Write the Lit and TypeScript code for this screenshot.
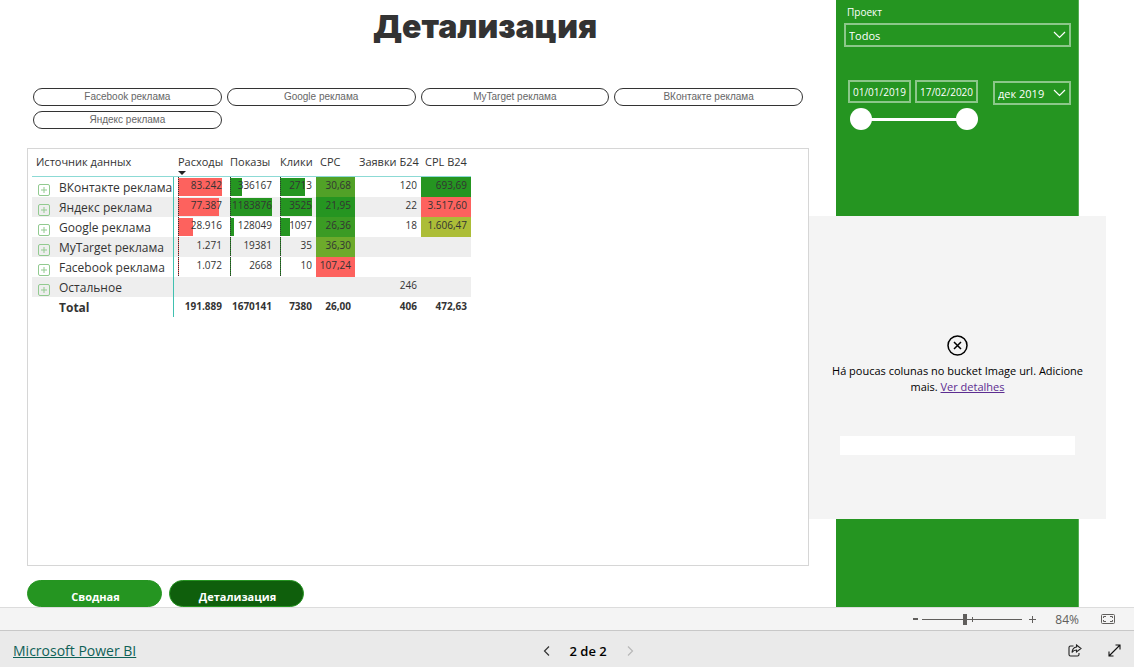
import { LitElement, html, css, svg, nothing } from "lit";
import { customElement, state } from "lit/decorators.js";

interface Cell {
  text: string;
  share?: number;
  tone?: string;
}

interface Row {
  name: string;
  cells: Cell[];
}

const RED = "#fd625e";
const GREEN = "#259521";

const COLUMNS = ["Расходы", "Показы", "Клики", "CPC", "Заявки Б24", "CPL В24"];

const ROWS: Row[] = [
  { name: "ВКонтакте реклама", cells: [{ text: "83.242", share: 100 }, { text: "336167", share: 28 }, { text: "2713", share: 77 }, { text: "30,68", tone: "#51a127" }, { text: "120" }, { text: "693,69", tone: GREEN }] },
  { name: "Яндекс реклама", cells: [{ text: "77.387", share: 93 }, { text: "1183876", share: 100 }, { text: "3525", share: 100 }, { text: "21,95", tone: GREEN }, { text: "22" }, { text: "3.517,60", tone: RED }] },
  { name: "Google реклама", cells: [{ text: "28.916", share: 35 }, { text: "128049", share: 10 }, { text: "1097", share: 31 }, { text: "26,36", tone: "#3b9b24" }, { text: "18" }, { text: "1.606,47", tone: "#acbd37" }] },
  { name: "MyTarget реклама", cells: [{ text: "1.271", share: 2 }, { text: "19381", share: 2 }, { text: "35", share: 1 }, { text: "36,30", tone: "#6daa2b" }, { text: "" }, { text: "" }] },
  { name: "Facebook реклама", cells: [{ text: "1.072", share: 1 }, { text: "2668", share: 0 }, { text: "10", share: 0 }, { text: "107,24", tone: RED }, { text: "" }, { text: "" }] },
  { name: "Остальное", cells: [{ text: "" }, { text: "" }, { text: "" }, { text: "" }, { text: "246" }, { text: "" }] },
];

const TOTALS = ["191.889", "1670141", "7380", "26,00", "406", "472,63"];

const chevron = html`<svg class="chevron" width="13" height="8" viewBox="0 0 13 8" aria-hidden="true">
  ${svg`<path d="M1 1l5.5 5.5L12 1" fill="none" stroke="currentColor" stroke-width="1.2"/>`}
</svg>`;

@customElement("source-table")
export class SourceTable extends LitElement {
  static styles = css`
    :host { display: block; color: #333; }
    table { border-collapse: separate; border-spacing: 0; table-layout: fixed; width: 439px; }
    .c-name { width: 142px; }
    .c-0 { width: 52px; }
    .c-1 { width: 50px; }
    .c-2 { width: 40px; }
    .c-3 { width: 39px; }
    .c-4 { width: 66px; }
    .c-5 { width: 50px; }
    th, td { padding: 0; white-space: nowrap; }
    thead th {
      height: 28px; font-weight: 400; font-size: 11px; line-height: 16px; text-align: left;
      vertical-align: top; padding: 5px 0 0 4px; box-sizing: border-box;
      border-bottom: 1px solid #8cdad5;
    }
    .sort {
      border: 0; background: none; padding: 0; font: inherit; color: inherit; display: block; cursor: pointer;
    }
    .sort svg { display: block; }
    tbody tr { height: 20px; }
    tbody tr:nth-child(even) { background: #eee; }
    .name {
      font-weight: 400; font-size: 12px; line-height: 20px; text-align: left;
      border-right: 1px solid #40c0b0;
    }
    .label { display: flex; align-items: center; gap: 9px; padding: 1px 0 0 6px; height: 20px; box-sizing: border-box; }
    .expand { border: 0; background: none; padding: 5px 0 0; display: block; height: 17px; cursor: pointer; }
    .expand svg { display: block; }
    td { font-size: 10px; line-height: 16px; text-align: right; vertical-align: top; padding-right: 4px; height: 20px; }
    .bar { display: grid; height: 20px; margin-left: 4px; }
    .bar::before {
      content: ""; grid-area: 1 / 1; width: 1px; z-index: 1;
      background: repeating-linear-gradient(#333 0 1px, transparent 1px 2px);
    }
    .fill { grid-area: 1 / 1; height: 18px; margin-top: 1px; min-width: 1px; background: #259521; }
    .spend .fill { background: #fd625e; }
    .value { grid-area: 1 / 1; z-index: 1; }
    .total .name { font-weight: 700; }
    .total .label { padding-left: 27px; }
    .total td { font-weight: 700; line-height: 18px; }
  `;

  render() {
    return html`<table>
      <colgroup>
        <col class="c-name" />
        ${COLUMNS.map((_, i) => html`<col class="c-${i}" />`)}
      </colgroup>
      <thead>
        <tr>
          <th scope="col">Источник данных</th>
          ${COLUMNS.map((c, i) => html`<th scope="col">
            <button class="sort" type="button">${c}${i === 0
              ? html`<svg width="8" height="5" viewBox="0 0 8 5"><path d="M0 1h8L4 5z" fill="#222" /></svg>`
              : nothing}</button>
          </th>`)}
        </tr>
      </thead>
      <tbody>
        ${ROWS.map((r) => html`<tr>
          <th class="name" scope="row">
            <div class="label">
              <button class="expand" type="button" aria-label=${r.name}>
                <svg width="12" height="12" viewBox="0 0 12 12" fill="none" stroke="#92ca90">
                  <rect x=".5" y=".5" width="11" height="11" rx="1.5" />
                  <path d="M6 3v6M3 6h6" />
                </svg>
              </button>
              ${r.name}
            </div>
          </th>
          ${r.cells.map((c, i) => c.share === undefined
            ? html`<td style=${c.tone ? `background:${c.tone}` : nothing}>${c.text}</td>`
            : html`<td>
                <div class="bar ${i === 0 ? "spend" : ""}">
                  <span class="fill" style="width:${c.share}%"></span>
                  <span class="value">${c.text}</span>
                </div>
              </td>`)}
        </tr>`)}
        <tr class="total">
          <th class="name" scope="row"><div class="label">Total</div></th>
          ${TOTALS.map((t) => html`<td>${t}</td>`)}
        </tr>
      </tbody>
    </table>`;
  }
}

@customElement("filter-panel")
export class FilterPanel extends LitElement {
  static styles = css`
    :host { display: block; color: #fff; box-sizing: border-box; padding: 4px 7px 0 8px; }
    * { box-sizing: border-box; }
    .caption { display: block; font-size: 10px; line-height: 16px; padding-left: 3px; font-weight: 500; }
    .picker { position: relative; display: block; margin-top: 3px; }
    .picker .chevron { position: absolute; right: 5px; top: 8px; pointer-events: none; }
    select, .date {
      font-family: inherit; color: #fff; background: transparent; border: 2px solid #8cc78a; border-radius: 0;
      appearance: none; width: 100%; height: 24px; margin: 0; display: block;
    }
    select { font-size: 11px; font-weight: 500; padding: 1px 3px 0; }
    option { color: #222; }
    .period { display: flex; justify-content: space-between; margin-top: 33px; padding-left: 4px; }
    .range { width: 130px; }
    .dates { display: grid; grid-template-columns: 1fr 1fr; gap: 4px; }
    .date { font-size: 10px; text-align: center; padding: 1px 0 0; height: 23px; }
    .month { width: 78px; margin-top: 1px; }
    .slider { position: relative; height: 22px; margin: 5px 0 0 2px; display: grid; align-items: center; }
    .track { height: 3px; background: #fff; margin: 0 11px; }
    .knob {
      position: absolute; inset: 0; width: 100%; height: 22px; margin: 0; appearance: none;
      background: transparent; pointer-events: none;
    }
    .knob::-webkit-slider-thumb {
      appearance: none; width: 22px; height: 22px; border-radius: 50%; background: #fff; pointer-events: auto;
    }
  `;

  render() {
    return html`
      <label class="caption" for="project">Проект</label>
      <div class="picker">
        <select id="project"><option>Todos</option></select>${chevron}
      </div>
      <div class="period">
        <div class="range">
          <div class="dates">
            <input class="date" type="text" aria-label="Data inicial" value="01/01/2019" />
            <input class="date" type="text" aria-label="Data final" value="17/02/2020" />
          </div>
          <div class="slider">
            <div class="track"></div>
            <input class="knob" type="range" aria-label="Data inicial" min="0" max="412" value="0" />
            <input class="knob" type="range" aria-label="Data final" min="0" max="412" value="412" />
          </div>
        </div>
        <div class="picker month">
          <select aria-label="Mês"><option>дек 2019</option></select>${chevron}
        </div>
      </div>
    `;
  }
}

@customElement("app-root")
export class AppRoot extends LitElement {
  @state() private sources = ["Facebook реклама", "Google реклама", "MyTarget реклама", "ВКонтакте реклама", "Яндекс реклама"];

  static styles = css`
    :host {
      display: flex; flex-direction: column; height: 100vh; background: #fff;
      font-family: "Open Sans", "Noto Sans", sans-serif; color: #333;
    }
    * { box-sizing: border-box; }
    button { font-family: inherit; cursor: pointer; }
    .stage { flex: 1; min-height: 0; display: flex; padding: 0 28px 0 27px; }
    .report { flex: 1; min-width: 0; display: flex; flex-direction: column; }
    h1 {
      margin: 0; padding: 6px 0 0 134px; font-family: Inter, "Liberation Sans", sans-serif; font-weight: 900;
      font-size: 32px; line-height: 42px; text-align: center; color: #333;
    }
    .chips { display: grid; grid-template-columns: repeat(4, 1fr); gap: 5px; padding: 0 6px; margin-top: 40px; }
    .chip {
      height: 18px; border: 1px solid #333; border-radius: 9px; background: #fff; color: #666; padding: 0;
      font-family: "Liberation Sans", sans-serif; font-size: 10px; line-height: 16px;
    }
    .card { flex: 1; border: 1px solid #d6d6d6; margin-top: 19px; padding: 0 4px; }
    .pages { display: flex; gap: 7px; padding-top: 14px; }
    .page {
      width: 135px; height: 27px; border: 1px solid #259521; border-radius: 14px; background: #259521; color: #fff;
      font-weight: 700; font-size: 11px; line-height: 18px; padding: 6px 0 0 2px;
    }
    .current { background: #0f5f0c; }
    .side { width: 297px; display: flex; flex-direction: column; }
    .green { background: #259521; margin: 0 27px; border-right: 1px solid #58ae55; }
    .filters { height: 216px; }
    .rest { flex: 1; }
    .error {
      height: 303px; background: #f4f4f4; display: flex; flex-direction: column; align-items: center;
      padding: 119px 16px 0; font-size: 11px; line-height: 16px; color: #000; text-align: center;
    }
    .error p { margin: 7px 0 0; }
    .error a { color: #5c2d91; }
    .blank { align-self: stretch; margin: 41px 15px 0; height: 19px; background: #fff; }
    .zoombar {
      height: 23px; background: #f4f4f4; border-top: 1px solid #dcdcdc; display: flex; align-items: center;
      justify-content: flex-end; padding-right: 19px; color: #605e5c; font-size: 12px;
    }
    .step { border: 0; background: none; padding: 0; width: 14px; height: 20px; color: inherit; display: grid; place-items: center; }
    .scale { position: relative; width: 100px; height: 12px; display: grid; margin: 0 3px 0 0; }
    .zoom {
      margin: 0; width: 100px; height: 12px; appearance: none;
      background: linear-gradient(#605e5c, #605e5c) center / 100% 1px no-repeat, linear-gradient(#605e5c, #605e5c) center / 1px 5px no-repeat;
    }
    .zoom::-webkit-slider-thumb { appearance: none; width: 4px; height: 11px; background: #605e5c; }
    .percent { margin: 0 22px 0 16px; }
    .fit { border: 0; background: none; padding: 0; display: block; color: inherit; }
    .fit svg, .tool svg, .nav svg { display: block; }
    .footer {
      height: 37px; background: #eaeaea; border-top: 1px solid #c8c8c8; display: flex; align-items: center;
      justify-content: space-between; padding: 3px 13px 0; color: #000;
    }
    .brand { color: #0f6157; font-size: 14px; line-height: 20px; }
    .pager { display: flex; align-items: center; gap: 20px; font-size: 13px; line-height: 20px; font-weight: 600; }
    .nav, .tool { border: 0; background: none; padding: 0; color: #333; }
    .nav:disabled { color: #b8b8b8; }
    .tools { display: flex; gap: 26px; padding-left: 28px; }
  `;

  render() {
    return html`
      <main class="stage">
        <section class="report">
          <h1>Детализация</h1>
          <div class="chips">${this.sources.map((s) => html`<button class="chip" type="button">${s}</button>`)}</div>
          <div class="card"><source-table></source-table></div>
          <nav class="pages">
            <button class="page" type="button">Сводная</button>
            <button class="page current" type="button" aria-current="page">Детализация</button>
          </nav>
        </section>
        <aside class="side">
          <filter-panel class="green filters"></filter-panel>
          <div class="error">
            <svg width="21" height="21" viewBox="0 0 21 21" fill="none" stroke="#000" stroke-width="1.5">
              <circle cx="10.5" cy="10.5" r="9.5" />
              <path d="M7 7l7 7M14 7l-7 7" />
            </svg>
            <p>Há poucas colunas no bucket Image url. Adicione mais. <a href="#">Ver detalhes</a></p>
            <div class="blank"></div>
          </div>
          <div class="green rest"></div>
        </aside>
      </main>
      <div class="zoombar">
        <button class="step" type="button" aria-label="Menos zoom">
          <svg width="5" height="2"><rect width="5" height="2" fill="#605e5c" /></svg>
        </button>
        <div class="scale"><input class="zoom" type="range" aria-label="Zoom" min="0" max="200" value="84" /></div>
        <button class="step" type="button" aria-label="Mais zoom">
          <svg width="7" height="7" viewBox="0 0 7 7" stroke="#605e5c"><path d="M3.5 0v7M0 3.5h7" /></svg>
        </button>
        <span class="percent">84%</span>
        <button class="fit" type="button" aria-label="Ajustar à página">
          <svg width="14" height="10" viewBox="0 0 14 10" fill="none" stroke="currentColor">
            <rect x=".5" y=".5" width="13" height="9" rx="1" />
            <path d="M5 2.5H2.5V4M2.5 6v1.5H5M9 2.5h2.5V4M11.5 6v1.5H9" />
          </svg>
        </button>
      </div>
      <footer class="footer">
        <a class="brand" href="#">Microsoft Power BI</a>
        <div class="pager">
          <button class="nav" type="button" aria-label="Página anterior">
            <svg width="7" height="10" viewBox="0 0 7 10" fill="none" stroke="currentColor" stroke-width="1.2"><path d="M6 .5L1.5 5 6 9.5" /></svg>
          </button>
          <span>2 de 2</span>
          <button class="nav" type="button" aria-label="Próxima página" disabled>
            <svg width="7" height="10" viewBox="0 0 7 10" fill="none" stroke="currentColor" stroke-width="1.2"><path d="M1 .5L5.5 5 1 9.5" /></svg>
          </button>
        </div>
        <div class="tools">
          <button class="tool" type="button" aria-label="Compartilhar">
            <svg width="14" height="13" viewBox="0 0 14 13" fill="none" stroke="#222" stroke-width="1.1">
              <path d="M5.5 2H2.500Q1 2 1 3.500v7Q1 12 2.500 12h7Q11 12 11 10.500V9" />
              <path d="M8.500 1l4.500 3.500L8.500 8V6Q5.500 6 4 8.500 4.500 3.500 8.500 3z" />
            </svg>
          </button>
          <button class="tool" type="button" aria-label="Tela inteira">
            <svg width="13" height="13" viewBox="0 0 13 13" fill="none" stroke="#111" stroke-width="1.1">
              <path d="M1 12L12 1M7.500 1H12v4.500M1 7.500V12h4.500" />
            </svg>
          </button>
        </div>
      </footer>
    `;
  }
}
